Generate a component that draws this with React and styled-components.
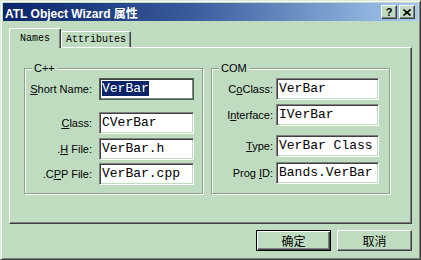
import React from 'react';
import styled, { createGlobalStyle } from 'styled-components';

const FACE = '#c0dcc0';

const GlobalStyle = createGlobalStyle`
  html, body {
    margin: 0;
    padding: 0;
    background: ${FACE};
  }
`;

const Window = styled.div`
  width: 421px;
  height: 260px;
  box-sizing: border-box;
  padding: 2px;
  background: ${FACE};
  border: 1px solid;
  border-color: #d8ecd8 #404040 #404040 #d8ecd8;
  box-shadow: inset 1px 1px 0 #fff, inset -1px -1px 0 #808080;
  font-family: 'Liberation Sans', 'Noto Sans CJK SC', sans-serif;
`;

const TitleBar = styled.div`
  height: 18px;
  display: flex;
  align-items: center;
  padding: 0 3px 0 2px;
  background: linear-gradient(90deg, #0a246a 0%, #3a5a9c 45%, #a6caf0 100%);
`;

const Title = styled.span`
  flex: 1;
  color: #fff;
  font-weight: bold;
  font-size: 12px;
  white-space: nowrap;
`;

const CaptionButton = styled.div`
  width: 16px;
  height: 14px;
  box-sizing: border-box;
  margin-left: ${(p) => (p.$first ? '0' : '2px')};
  display: flex;
  align-items: center;
  justify-content: center;
  background: ${FACE};
  border: 1px solid;
  border-color: #fff #404040 #404040 #fff;
  box-shadow: inset -1px -1px 0 #808080;
  font-weight: bold;
  font-size: 11px;
  line-height: 1;
  color: #000;
`;

const Body = styled.div`
  padding: 7px 6px 0;
`;

const TabStrip = styled.div`
  display: flex;
  align-items: flex-end;
  height: 19px;
  position: relative;
  z-index: 1;
`;

const Tab = styled.div`
  height: ${(p) => (p.$active ? '20px' : '16px')};
  margin-bottom: ${(p) => (p.$active ? '-1px' : '0')};
  padding: 0 ${(p) => (p.$active ? '10px' : '4px')};
  box-sizing: border-box;
  display: flex;
  align-items: center;
  background: ${FACE};
  border-left: 1px solid #fff;
  border-top: 1px solid #fff;
  border-right: 1px solid #404040;
  box-shadow: inset -1px 0 0 #808080;
  border-radius: 2px 2px 0 0;
  font-family: 'Liberation Mono', 'DejaVu Sans Mono', monospace;
  font-size: 10px;
  color: #000;
`;

const Panel = styled.div`
  height: 177px;
  box-sizing: border-box;
  display: flex;
  gap: 8px;
  padding: 20px 0 0 14px;
  border: 1px solid;
  border-color: #fff #404040 #404040 #fff;
  box-shadow: inset -1px -1px 0 #808080;
`;

const Group = styled.div`
  position: relative;
  width: 179px;
  height: 126px;
  box-sizing: border-box;
  padding: 9px ${(p) => p.$padRight}px 0 0;
  border: 1px solid #8ca08c;
  box-shadow: inset 1px 1px 0 #fff, 1px 1px 0 #fff;
`;

const GroupCaption = styled.span`
  position: absolute;
  top: -8px;
  left: 7px;
  padding: 0 2px;
  background: ${FACE};
  font-size: 11px;
  line-height: 14px;
  color: #000;
`;

const Row = styled.div`
  display: grid;
  grid-template-columns: 1fr ${(p) => p.$field}px;
  column-gap: ${(p) => p.$gap}px;
  align-items: center;
  margin-top: ${(p) => p.$mt || 0}px;
`;

const Label = styled.span`
  text-align: right;
  font-size: 11px;
  color: #000;
  white-space: nowrap;
`;

const Field = styled.div`
  height: 22px;
  box-sizing: border-box;
  padding-left: 2px;
  background: #fff;
  border: 1px solid;
  border-color: ${(p) => (p.$focused ? '#505e50' : '#808080 #fff #fff #808080')};
  box-shadow: ${(p) =>
    p.$focused
      ? 'inset 1px 1px 0 #404040, inset -1px -1px 0 #7c8c7c'
      : `inset 1px 1px 0 #404040, inset -1px -1px 0 ${FACE}`};
  font-family: 'Liberation Mono', 'DejaVu Sans Mono', monospace;
  font-size: 13px;
  line-height: 20px;
  color: #000;
  white-space: nowrap;
  overflow: hidden;
`;

const Selected = styled.span`
  background: #0a246a;
  color: #fff;
`;

const ButtonRow = styled.div`
  display: flex;
  justify-content: flex-end;
  gap: 6px;
  margin-top: 6px;
`;

const Button = styled.div`
  width: 75px;
  height: 21px;
  box-sizing: border-box;
  display: flex;
  align-items: center;
  justify-content: center;
  background: ${FACE};
  border: 1px solid;
  border-color: ${(p) => (p.$default ? '#000' : '#fff #404040 #404040 #fff')};
  box-shadow: ${(p) =>
    p.$default
      ? 'inset 1px 1px 0 #fff, inset -1px -1px 0 #404040, inset -2px -2px 0 #808080'
      : 'inset -1px -1px 0 #808080'};
  font-family: 'Noto Sans CJK SC', sans-serif;
  font-size: 12px;
  color: #000;
`;

const Key = styled.u`
  text-decoration: underline;
  text-underline-offset: 1px;
`;

const CloseGlyph = () => (
  <svg width="8" height="7" viewBox="0 0 8 7">
    <path d="M0.5 0.5 L7.5 6.5 M7.5 0.5 L0.5 6.5" stroke="#000" strokeWidth="1.6" fill="none" />
  </svg>
);

const cppRows = [
  { label: <><Key>S</Key>hort Name:</>, value: 'VerBar', focused: true, mt: 0 },
  { label: <><Key>C</Key>lass:</>, value: 'CVerBar', mt: 12 },
  { label: <>.<Key>H</Key> File:</>, value: 'VerBar.h', mt: 4 },
  { label: <>.C<Key>P</Key>P File:</>, value: 'VerBar.cpp', mt: 3 },
];

const comRows = [
  { label: <>C<Key>o</Key>Class:</>, value: 'VerBar', mt: 0 },
  { label: <>I<Key>n</Key>terface:</>, value: 'IVerBar', mt: 4 },
  { label: <><Key>T</Key>ype:</>, value: 'VerBar Class', mt: 9 },
  { label: <>Prog <Key>I</Key>D:</>, value: 'Bands.VerBar', mt: 5 },
];

export default function App() {
  return (
    <>
      <GlobalStyle />
      <Window>
        <TitleBar>
          <Title>ATL Object Wizard 属性</Title>
          <CaptionButton $first>?</CaptionButton>
          <CaptionButton>
            <CloseGlyph />
          </CaptionButton>
        </TitleBar>
        <Body>
          <TabStrip>
            <Tab $active>Names</Tab>
            <Tab>Attributes</Tab>
          </TabStrip>
          <Panel>
            <Group $padRight={8}>
              <GroupCaption>C++</GroupCaption>
              {cppRows.map((r, i) => (
                <Row key={i} $field={95} $gap={7} $mt={r.mt}>
                  <Label>{r.label}</Label>
                  <Field $focused={r.focused}>
                    {r.focused ? <Selected>{r.value}</Selected> : r.value}
                  </Field>
                </Row>
              ))}
            </Group>
            <Group $padRight={10}>
              <GroupCaption>COM</GroupCaption>
              {comRows.map((r, i) => (
                <Row key={i} $field={103} $gap={3} $mt={r.mt}>
                  <Label>{r.label}</Label>
                  <Field>{r.value}</Field>
                </Row>
              ))}
            </Group>
          </Panel>
          <ButtonRow>
            <Button $default>确定</Button>
            <Button>取消</Button>
          </ButtonRow>
        </Body>
      </Window>
    </>
  );
}
